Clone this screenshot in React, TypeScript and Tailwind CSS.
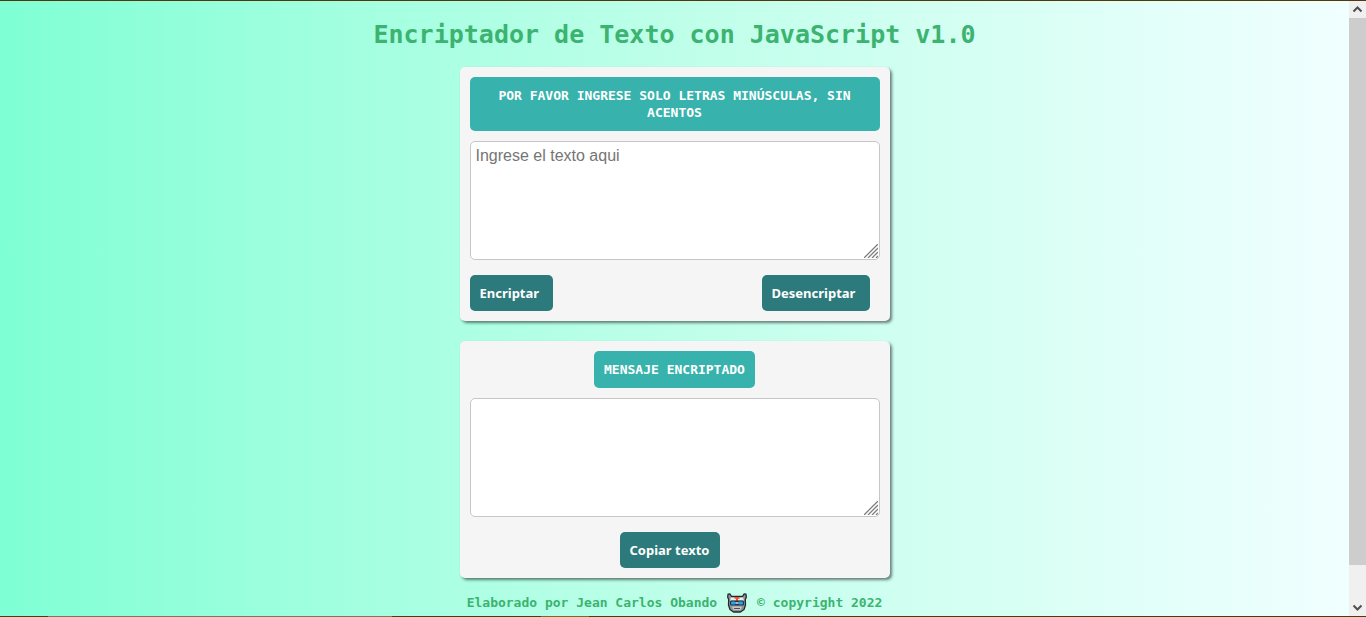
import { useState } from "react";
import type { ReactNode } from "react";

const panel =
  "flex w-full max-w-[430px] flex-col items-center rounded-[5px] bg-[#f5f5f5] p-[10px] shadow-[2px_2px_3px_rgba(0,0,0,0.5)]";
const heading =
  "rounded-[5px] bg-[#38b2ac] p-[10px] text-center text-[13px] leading-[17px] font-bold text-white uppercase";
const button =
  "h-9 cursor-pointer rounded-[5px] bg-[#2c7a7b] pt-0.5 pl-[10px] text-left font-['Noto_Sans',sans-serif] text-[13px] font-bold text-white hover:bg-[#285e61]";

function ResizeGrip() {
  return (
    <svg
      className="pointer-events-none absolute right-[2px] bottom-[2px] size-[14px]"
      viewBox="0 0 14 14"
      fill="none"
      stroke="#7d7d7d"
      strokeWidth="1.3"
      aria-hidden="true"
    >
      <path d="M0 14 14 0M4 14 14 4M8 14l6-6M12 14l2-2" />
    </svg>
  );
}

function TextField(props: {
  id: string;
  placeholder?: string;
  value: string;
  onChange: (value: string) => void;
}) {
  return (
    <div className="relative mt-[10px] w-full">
      <textarea
        id={props.id}
        className="block h-[119px] w-full resize-none rounded-[5px] border border-[#c6c6c6] bg-white px-[5px] py-[5px] font-['Liberation_Sans',sans-serif] text-base leading-[18px] text-black outline-none placeholder:text-[#757575]"
        placeholder={props.placeholder}
        value={props.value}
        onChange={(e) => props.onChange(e.target.value)}
      />
      <ResizeGrip />
    </div>
  );
}

function RobotIcon() {
  return (
    <svg className="size-5 shrink-0" viewBox="0 0 20 20" aria-hidden="true">
      <path
        d="M1 1.200 3 1l1.500 2.500h11L17 1l2 .2.3 3-1 2.300.2 5.500-1.500 4.500-3.500 2.500h-7L3 16.500 1.500 12l.2-5.500-1-2.300Z"
        fill="#8f949b"
        stroke="#26282c"
        strokeWidth="1.300"
        strokeLinejoin="round"
      />
      <path d="M4 4.500h12l1 3H3Z" fill="#ececec" />
      <path d="M7.500 4h5v1.800h-1.500V8H9V5.800H7.500Z" fill="#f4502f" />
      <rect x="3" y="7.500" width="14" height="5" rx="1.500" fill="#24323d" />
      <rect x="4" y="8.500" width="4.500" height="3" rx="1" fill="#18a9ee" />
      <rect x="11.500" y="8.500" width="4.500" height="3" rx="1" fill="#18a9ee" />
      <path d="M8.500 10h3" stroke="#d9e6ee" strokeWidth="1.500" />
      <path d="M5 13.500h10L13.500 17h-7Z" fill="#c3c6ca" />
      <path d="M7 15.500h6" stroke="#4b4e52" />
    </svg>
  );
}

function Chevron({ up = false }: { up?: boolean }) {
  return (
    <svg className="h-[17px] w-[17px]" viewBox="0 0 17 17" fill="none" stroke="#505050" strokeWidth="2" aria-hidden="true">
      <path d={up ? "m4.500 10.500 4-4 4 4" : "m4.500 6.500 4 4 4-4"} />
    </svg>
  );
}

function ScrollTrack() {
  return (
    <div className="flex w-[17px] shrink-0 flex-col bg-[#f0f0f0]" aria-hidden="true">
      <Chevron up />
      <div className="flex grow flex-col">
        <div className="grow-[16] bg-[#cdcdcd]" />
        <div className="grow" />
      </div>
      <Chevron />
    </div>
  );
}

const codes: [string, string][] = [
  ["e", "enter"],
  ["i", "imes"],
  ["a", "ai"],
  ["o", "ober"],
  ["u", "ufat"],
];

const encrypt = (text: string) =>
  text.replace(/[eiaou]/g, (c) => codes.find(([k]) => k === c)![1]);
const decrypt = (text: string) =>
  codes.reduce((t, [k, v]) => t.split(v).join(k), text);

function Panel({ children }: { children: ReactNode }) {
  return <section className={panel}>{children}</section>;
}

export default function App() {
  const [input, setInput] = useState("");
  const [output, setOutput] = useState("");

  return (
    <div className="flex min-h-screen flex-col font-['DejaVu_Sans_Mono',monospace]">
      <div className="h-px bg-[#523a08]" />
      <div className="flex grow">
        <div className="flex min-w-0 grow flex-col items-center bg-linear-to-r from-[#7fffd4] to-[#f0ffff]">
          <h1 className="mt-[17px] text-center text-[25px] leading-[34px] font-bold text-[#3cb371]">
            Encriptador de Texto con JavaScript v1.0
          </h1>
          <main className="mt-[15px] flex w-full flex-col items-center gap-5">
            <Panel>
              <label htmlFor="source" className={heading}>
                Por favor ingrese solo letras minúsculas, sin acentos
              </label>
              <TextField id="source" placeholder="Ingrese el texto aqui" value={input} onChange={setInput} />
              <div className="mt-[15px] flex w-full justify-between pr-[10px]">
                <button type="button" className={`${button} w-[83px]`} onClick={() => setOutput(encrypt(input))}>
                  Encriptar
                </button>
                <button type="button" className={`${button} w-[108px]`} onClick={() => setOutput(decrypt(input))}>
                  Desencriptar
                </button>
              </div>
            </Panel>
            <Panel>
              <label htmlFor="result" className={heading}>
                Mensaje encriptado
              </label>
              <TextField id="result" value={output} onChange={setOutput} />
              <div className="mt-[15px] flex w-full justify-center pr-[10px]">
                <button
                  type="button"
                  className={`${button} w-[100px]`}
                  onClick={() => navigator.clipboard?.writeText(output)}
                >
                  Copiar texto
                </button>
              </div>
            </Panel>
          </main>
          <footer className="mt-[15px] flex items-center gap-[10px] text-[13px] leading-5 font-bold text-[#3cb371]">
            <span>Elaborado por Jean Carlos Obando</span>
            <RobotIcon />
            <span>© copyright 2022</span>
          </footer>
        </div>
        <ScrollTrack />
      </div>
      <div className="flex h-px bg-[#523a08]">
        <div className="ml-12 w-[344px] bg-[#8a7355]" />
        <div className="ml-[149px] w-12 bg-[#8a6414]" />
      </div>
    </div>
  );
}
